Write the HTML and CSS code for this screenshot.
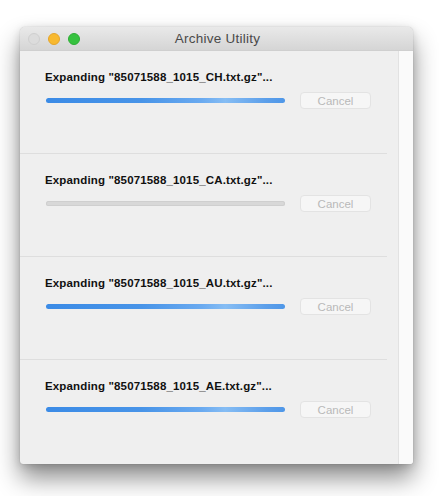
FILE: index.html
```html
<!DOCTYPE html>
<html>
<head>
<meta charset="utf-8">
<link rel="stylesheet" href="styles.css">
</head>
<body>
<div class="window">
  <div class="titlebar">
    <div class="lights">
      <span class="light close"></span>
      <span class="light min"></span>
      <span class="light max"></span>
    </div>
    <div class="title">Archive Utility</div>
  </div>
  <div class="body">
    <div class="list">
      <div class="row">
        <div class="label">Expanding "85071588_1015_CH.txt.gz"...</div>
        <div class="progress-line">
          <div class="bar active"></div>
          <div class="cancel">Cancel</div>
        </div>
      </div>
      <div class="row">
        <div class="label">Expanding "85071588_1015_CA.txt.gz"...</div>
        <div class="progress-line">
          <div class="bar idle"></div>
          <div class="cancel">Cancel</div>
        </div>
      </div>
      <div class="row">
        <div class="label">Expanding "85071588_1015_AU.txt.gz"...</div>
        <div class="progress-line">
          <div class="bar active"></div>
          <div class="cancel">Cancel</div>
        </div>
      </div>
      <div class="row last">
        <div class="label">Expanding "85071588_1015_AE.txt.gz"...</div>
        <div class="progress-line">
          <div class="bar active"></div>
          <div class="cancel">Cancel</div>
        </div>
      </div>
    </div>
    <div class="scroll"></div>
  </div>
</div>
</body>
</html>
```

FILE: styles.css
```css
html, body {
  margin: 0;
  padding: 0;
  background: #ffffff;
}
body {
  font-family: "Liberation Sans", Arial, sans-serif;
  padding: 27px 0 0 20px;
  height: 496px;
  box-sizing: border-box;
  overflow: hidden;
}
.window {
  width: 393px;
  height: 437px;
  background: #efefef;
  border-radius: 5px 5px 3px 3px;
  box-shadow: 0 14px 24px rgba(0,0,0,0.45), 0 2px 8px rgba(0,0,0,0.15), 0 0 1px rgba(0,0,0,0.3);
  overflow: hidden;
  display: flex;
  flex-direction: column;
}
.titlebar {
  height: 23px;
  flex: none;
  background: linear-gradient(to bottom, #e9e9e9, #d5d5d5);
  border-bottom: 1px solid #cfcfcf;
  display: flex;
  align-items: center;
  position: relative;
}
.lights {
  display: flex;
  gap: 8px;
  padding-left: 8px;
  align-items: center;
}
.light {
  width: 12px;
  height: 12px;
  border-radius: 50%;
  box-sizing: border-box;
}
.close {
  background: #dcdcdc;
  border: 1px solid #cfcfcf;
}
.min {
  background: #f8b92f;
  border: 1px solid #e5a52a;
}
.max {
  background: #36c23f;
  border: 1px solid #2ead35;
}
.title {
  position: absolute;
  left: 0;
  right: 0;
  top: 0;
  bottom: 0;
  display: flex;
  align-items: center;
  justify-content: center;
  font-size: 13.5px;
  letter-spacing: 0.25px;
  color: #4a4a4a;
  padding-left: 2px;
}
.body {
  flex: 1;
  display: flex;
}
.list {
  width: 378px;
  flex: none;
  display: flex;
  flex-direction: column;
}
.row {
  height: 83px;
  border-bottom: 1px solid #dedede;
  margin-right: 11px;
  padding: 19px 0 0 25px;
}
.row.last {
  border-bottom: none;
}
.label {
  font-size: 11.5px;
  font-weight: bold;
  color: #111;
  line-height: 14px;
  letter-spacing: 0.15px;
}
.progress-line {
  display: flex;
  align-items: center;
  margin-top: 8px;
  gap: 15px;
}
.bar {
  width: 239px;
  height: 5px;
  border-radius: 3px;
  margin-left: 1px;
}
.bar.active {
  background: linear-gradient(to right, #3b8be6 0%, #4894e8 40%, #6aaaf0 65%, #86bdf4 75%, #5c9fea 92%, #4f97e8 100%);
}
.bar.idle {
  background: #d8d8d8;
  box-shadow: inset 0 0 0 1px #cfcfcf;
}
.cancel {
  width: 71px;
  height: 17px;
  box-sizing: border-box;
  border: 1px solid #e3e3e3;
  border-radius: 4px;
  background: #f6f6f6;
  color: #b9b9b9;
  font-size: 11.5px;
  display: flex;
  align-items: center;
  justify-content: center;
}
.scroll {
  flex: 1;
  background: #fafafa;
  border-left: 1px solid #e2e2e2;
}
```
